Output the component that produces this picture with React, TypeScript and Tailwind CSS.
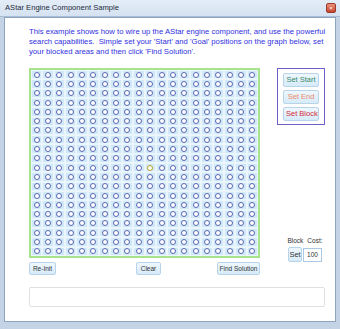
import React from "react";

const COLS = 20;
const ROWS = 20;

function Cell({ hot }: { hot?: boolean }) {
  return (
    <div className="flex items-center justify-center bg-[#d0e8f8] border border-[#eaf5fc]">
      <div
        className={`w-[6px] h-[6px] rounded-full border-[1.5px] bg-white ${
          hot ? "border-[#b8a41c]" : "border-[#5a68b0]"
        }`}
      />
    </div>
  );
}

function SmallButton({ label, className }: { label: string; className?: string }) {
  return (
    <div
      className={`h-[13px] px-[2px] flex items-center justify-center whitespace-nowrap overflow-hidden rounded-[2px] border border-[#b9d4ea] bg-gradient-to-b from-[#eef7fd] to-[#d6ebf9] text-[6.5px] text-[#333] ${className ?? ""}`}
    >
      {label}
    </div>
  );
}

export default function App() {
  const cells = [];
  for (let r = 0; r < ROWS; r++) {
    for (let c = 0; c < COLS; c++) {
      cells.push(<Cell key={`${r}-${c}`} hot={r === 10 && c === 10} />);
    }
  }

  return (
    <div className="w-[340px] h-[329px] flex flex-col bg-[#c4d3e6] font-['Liberation_Sans',Arial,sans-serif] overflow-hidden">
      {/* title bar */}
      <div className="h-[17px] flex items-center justify-between pl-[5px] pr-[4px] bg-gradient-to-b from-[#e4edf7] to-[#d5e2f1] border-b border-[#a9bdd6]">
        <span className="text-[7.6px] text-[#1e2a3a]">AStar Engine Component Sample</span>
        <div className="w-[10px] h-[10px] rounded-[2px] bg-gradient-to-b from-[#e9907a] to-[#c7452b] border border-[#9b3a2a] flex items-center justify-center text-white text-[6px] leading-none">
          ×
        </div>
      </div>

      {/* client */}
      <div className="flex-1 mx-[4px] mb-[7px] bg-white border border-[#8ea3be] flex flex-col pl-[24px] pr-[10px]">
        <div className="pt-[9px] text-[7.7px] leading-[10px] text-[#3030e0]">
          <div className="whitespace-nowrap">
            This example shows how to wire up the AStar engine component, and use the powerful
          </div>
          <div className="whitespace-nowrap">
            search capabilities.&nbsp; Simple set your 'Start' and 'Goal' positions on the graph below, set
          </div>
          <div className="whitespace-nowrap">your blocked areas and then click 'Find Solution'.</div>
        </div>

        <div className="mt-[11px] flex">
          {/* left: grid + buttons */}
          <div className="flex flex-col w-[231px]">
            <div className="border-2 border-[#a6e38c] bg-[#eaf5fc]">
              <div className="grid grid-cols-[repeat(20,minmax(0,1fr))] grid-rows-[repeat(20,minmax(0,1fr))] w-[227px] h-[186px]">
                {cells}
              </div>
            </div>
            <div className="mt-[4px] flex items-center">
              <SmallButton label="Re-Init" className="w-[27px]" />
              <SmallButton label="Clear" className="w-[25px] ml-[80px]" />
              <SmallButton label="Find Solution" className="w-[43px] ml-auto" />
            </div>
          </div>

          {/* right: mode + block cost */}
          <div className="ml-[17px] w-[55px] flex flex-col justify-between pb-[13px]">
            <div className="h-[57px] border border-[#6f5fc4] flex flex-col items-center justify-center gap-[3px]">
              <SmallButton label="Set Start" className="w-[36px] h-[14px] text-[7.5px] !text-[#3a8a6a]" />
              <SmallButton label="Set End" className="w-[36px] h-[14px] text-[7.5px] !text-[#ef8a6a]" />
              <div className="w-[36px] h-[14px] overflow-hidden rounded-[2px] border border-[#b9d4ea] bg-gradient-to-b from-[#eef7fd] to-[#d6ebf9] flex items-center pl-[2px] text-[7.5px] text-[#d8283a] whitespace-nowrap">
                Set Blocks
              </div>
            </div>
            <div className="flex flex-col items-center pl-[8px]">
              <div className="text-[6.5px] text-[#333] flex gap-[4px]">
                <span>Block</span>
                <span>Cost:</span>
              </div>
              <div className="flex items-center gap-[1px] mt-[1px]">
                <SmallButton label="Set" className="w-[14px] h-[15px] text-[7.5px] px-0" />
                <div className="w-[19px] h-[14px] border border-[#a9c9e4] bg-white flex items-center justify-center text-[6.5px] text-[#333]">
                  100
                </div>
              </div>
            </div>
          </div>
        </div>

        <div className="mt-[12px] w-[296px] h-[20px] border border-[#e0e0e0] rounded-[2px]" />
      </div>
    </div>
  );
}
